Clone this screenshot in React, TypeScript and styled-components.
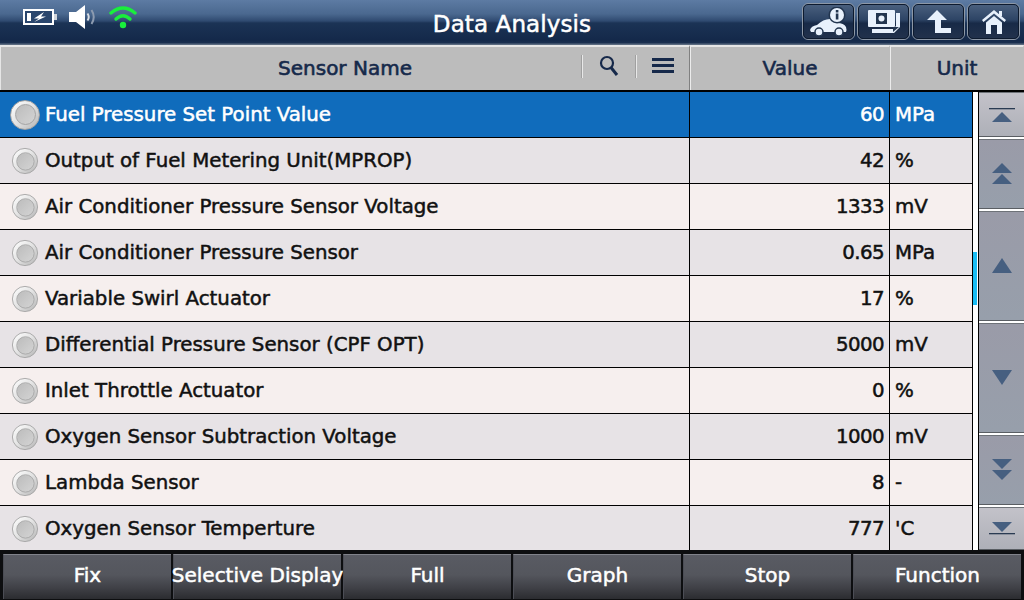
import React from "react";
import styled, { createGlobalStyle } from "styled-components";

const Global = createGlobalStyle`
  html, body { margin: 0; padding: 0; background: #000; }
  #root { width: 1024px; height: 600px; overflow: hidden; }
  * { box-sizing: border-box; }
`;

const font = `"DejaVu Sans", "Liberation Sans", sans-serif`;

const Screen = styled.div`
  width: 1024px;
  height: 600px;
  display: flex;
  flex-direction: column;
  overflow: hidden;
  font-family: ${font};
  background: #fff;
`;

const TitleBar = styled.header`
  position: relative;
  flex: 0 0 45px;
  height: 45px;
  display: flex;
  align-items: flex-start;
  justify-content: space-between;
  padding: 3px 4px 0 23px;
  background: linear-gradient(#5d7ba3 0, #4a688f 14px, #2f4a70 21px, #1b3355 23px, #14294a 40px, #1b3050 43px, #5b6b80 44px);
`;

const StatusIcons = styled.div`
  display: flex;
  align-items: center;
  gap: 11px;
  height: 32px;
  margin-top: -2px;
`;

const Title = styled.h1`
  position: absolute;
  left: 0;
  right: 0;
  top: 7px;
  margin: 0;
  text-align: center;
  color: #fff;
  font-size: 23px;
  line-height: 34px;
  font-weight: 400;
  letter-spacing: 0.1px;
  -webkit-text-stroke: 0.5px #fff;
`;

const NavButtons = styled.div`
  display: flex;
  gap: 2px;
`;

const NavButton = styled.button`
  width: 53px;
  height: 37px;
  padding: 0;
  display: flex;
  align-items: center;
  justify-content: center;
  border-radius: 6px;
  border: 1px solid #8c97a6;
  outline: 1px solid #0d1a2e;
  outline-offset: -2px;
  background: linear-gradient(#4b617f, #2d4465 45%, #182a47 55%, #22324c);
`;

const Main = styled.main`
  flex: 1;
  min-height: 0;
  display: flex;
  flex-direction: column;
`;

const Header = styled.div`
  flex: 0 0 47px;
  display: grid;
  grid-template-columns: 690px 200px 134px;
  border-bottom: 2px solid #000;
  background: #bcbcbc;
`;

const HeadCell = styled.div<{ $first?: boolean }>`
  display: flex;
  align-items: center;
  justify-content: center;
  position: relative;
  border-top: 2px solid #e6e6e6;
  border-left: 1px solid ${(p) => (p.$first ? "#e6e6e6" : "#ececec")};
  border-right: 1px solid ${(p) => (p.$first ? "#808080" : "transparent")};
  color: #16294a;
  font-size: 20px;
  font-weight: 400;
  -webkit-text-stroke: 0.6px #16294a;
  padding-bottom: 2px;
`;

const HeadTools = styled.div`
  position: absolute;
  right: 0;
  top: 7px;
  width: 107px;
  height: 24px;
  display: flex;
  align-items: center;
`;

const ToolDivider = styled.i`
  display: block;
  width: 1px;
  height: 23px;
  background: #e8e8e8;
  box-shadow: -1px 0 0 #a0a0a0;
`;

const ToolSlot = styled.div<{ $w: number }>`
  width: ${(p) => p.$w}px;
  display: flex;
  justify-content: center;
  align-items: center;
`;

const Body = styled.div`
  flex: 1;
  min-height: 0;
  display: grid;
  grid-template-columns: 973px 5px 46px;
  overflow: hidden;
`;

const Rows = styled.div`
  border-right: 1px solid #000;
  overflow: hidden;
`;

const Row = styled.div<{ $tone: "sel" | "a" | "b" }>`
  height: 46px;
  display: grid;
  grid-template-columns: 690px 200px 82px;
  border-bottom: 1px solid #000;
  color: ${(p) => (p.$tone === "sel" ? "#fff" : "#111")};
  background: ${(p) => (p.$tone === "sel" ? "#106cbc" : p.$tone === "a" ? "#e7e3e6" : "#f6efee")};
`;

const Cell = styled.div`
  display: flex;
  align-items: center;
  font-size: 19.8px;
  -webkit-text-stroke: 0.5px currentColor;
  white-space: nowrap;
`;

const NameCell = styled(Cell)`
  border-right: 1px solid #000;
  padding-left: 10px;
  gap: 5px;
`;

const ValueCell = styled(Cell)`
  justify-content: flex-end;
  border-right: 1px solid #000;
  padding-right: 5px;
  letter-spacing: -0.6px;
`;

const UnitCell = styled(Cell)`
  padding-left: 5px;
`;

const Radio = styled.span<{ $big?: boolean }>`
  flex: none;
  width: 30px;
  height: 30px;
  transform: scale(${(p) => (p.$big ? 1 : 0.87)});
  border-radius: 50%;
  border: 1px solid #a2a2a2;
  background: linear-gradient(135deg, #ffffff, #e2e2e2 50%, #b4b4b4);
  display: flex;
  align-items: center;
  justify-content: center;
  &::after {
    content: "";
    width: 19px;
    height: 19px;
    border-radius: 50%;
    border: 1px solid #a4a4a4;
    background: linear-gradient(135deg, #bcbcbc, #d4d4d4);
  }
`;

const Track = styled.div`
  position: relative;
  background: #fff;
`;

const Thumb = styled.div`
  position: absolute;
  left: 0;
  width: 4px;
  top: 160px;
  height: 53px;
  background: #18bdf5;
`;

const Side = styled.div`
  border-left: 1px solid #000;
  background: #fff;
  display: flex;
  flex-direction: column;
  gap: 2px;
  overflow: hidden;
`;

const SideButton = styled.button<{ $h: number; $end?: boolean }>`
  flex: 0 0 ${(p) => p.$h}px;
  height: ${(p) => p.$h}px;
  padding: 0;
  border: 0;
  border-top: 1px solid #6e7278;
  border-bottom: 1px solid #5a5e63;
  display: flex;
  align-items: center;
  justify-content: center;
  background: ${(p) =>
    p.$end
      ? "linear-gradient(#c3c2c9, #aeb0b8)"
      : "linear-gradient(#9a9ba8, #979fab)"};
`;

const Footer = styled.footer`
  flex: 0 0 50px;
  display: grid;
  grid-template-columns: repeat(6, 170px);
  padding: 4px 0 1px 3px;
  background: #0d0e10;
`;

const FootButton = styled.button`
  margin: 0 2px 0 0;
  padding: 0 0 5px;
  border: 0;
  border-top: 1px solid #80828a;
  border-left: 1px solid #4b4d55;
  color: #fff;
  font-family: ${font};
  font-size: 20px;
  -webkit-text-stroke: 0.5px #fff;
  white-space: nowrap;
  display: flex;
  align-items: center;
  justify-content: center;
  background: linear-gradient(#595b63, #54565d 45%, #3f4046 75%, #2b2c30);
`;

const Battery = () => (
  <svg width="34" height="20" viewBox="0 0 34 20">
    <rect x="0" y="2" width="31" height="16" fill="#fff" />
    <rect x="2" y="4" width="27" height="12" fill="#2a466d" />
    <rect x="4" y="6" width="4" height="8" fill="#fff" />
    <rect x="31" y="7" width="3" height="6" fill="#d0d4da" />
    <path d="M21 5 L11 11.5 H16 L11 15 L23 9.5 H18Z" fill="#fff" />
  </svg>
);

const Speaker = () => (
  <svg width="30" height="26" viewBox="0 0 30 26">
    <path d="M1 8H8L17 1V25L8 18H1Z" fill="#fff" />
    <path d="M19.5 9.5Q22 13 19.5 16.5" fill="none" stroke="#d8dde4" strokeWidth="2" />
    <path d="M23.5 6Q28 13 23.5 20" fill="none" stroke="#8d9bb0" strokeWidth="2" />
  </svg>
);

const Wifi = () => (
  <svg width="28" height="24" viewBox="0 0 28 24">
    <g fill="none" stroke="#19ee3c" strokeWidth="3.4" strokeLinecap="round">
      <path d="M2 8Q14 -2 26 8" />
      <path d="M7 14Q14 7.5 21 14" />
    </g>
    <circle cx="14" cy="20" r="3.2" fill="#19ee3c" />
  </svg>
);

const ink = "#e8f1fc";
const dark = "#22354f";

const CarInfo = () => (
  <svg width="38" height="30" viewBox="0 0 38 30">
    <path d="M0 23 Q1 19 7 18 Q14 11 22 12 L27 16 Q34 16 36 20 Q37 23 36 25 H1Z" fill={ink} />
    <circle cx="9" cy="25" r="4" fill={ink} stroke={dark} strokeWidth="1.5" />
    <circle cx="29" cy="25" r="4" fill={ink} stroke={dark} strokeWidth="1.5" />
    <circle cx="27" cy="8" r="8.5" fill={dark} />
    <circle cx="27" cy="8" r="7" fill={ink} />
    <rect x="25.8" y="6.5" width="2.6" height="6" fill={dark} />
    <rect x="25.8" y="3" width="2.6" height="2.5" fill={dark} />
  </svg>
);

const Snapshot = () => (
  <svg width="32" height="24" viewBox="0 0 32 24">
    <path d="M28 3H32V17L26 23H4V19H25L28 16Z" fill={ink} />
    <path d="M25 22V17H31Z" fill={dark} />
    <rect x="0" y="0" width="27" height="17" rx="1" fill={ink} />
    <rect x="3" y="3" width="21" height="11" fill={dark} />
    <rect x="3" y="3" width="5" height="11" fill={ink} />
    <rect x="19" y="3" width="5" height="11" fill={ink} />
    <circle cx="13.5" cy="8.5" r="3" fill={ink} />
  </svg>
);

const BackArrow = () => (
  <svg width="24" height="23" viewBox="0 0 24 23">
    <path d="M0 10L10 0L20 10H14V18H24V23H8V10Z" fill={ink} />
  </svg>
);

const HomeIcon = () => (
  <svg width="24" height="24" viewBox="0 0 24 24">
    <path d="M12 0L24 10L22.5 12L12 3.5L1.5 12L0 10Z" fill={ink} />
    <path d="M12 6L20 12.5V24H15V15H9V24H4V12.5Z" fill={ink} />
    <rect x="17" y="1" width="3" height="5" fill={ink} />
  </svg>
);

const SearchIcon = () => (
  <svg width="20" height="22" viewBox="0 0 20 22">
    <circle cx="8" cy="8" r="6" fill="none" stroke="#16294a" strokeWidth="2.2" />
    <path d="M12 12.5L18 20" stroke="#16294a" strokeWidth="3" />
  </svg>
);

const MenuIcon = () => (
  <svg width="22" height="16" viewBox="0 0 22 16">
    <rect y="0" width="22" height="3" fill="#16294a" />
    <rect y="6" width="22" height="3" fill="#16294a" />
    <rect y="12" width="22" height="3" fill="#16294a" />
  </svg>
);

const arrowFill = "#465f80";

const ArrowEnd = ({ down }: { down?: boolean }) => (
  <svg width="28" height="18" viewBox="0 0 28 18">
    {down ? (
      <>
        <path d="M4 2H24L14 12Z" fill={arrowFill} />
        <rect x="1" y="13" width="26" height="1.3" fill="#2a3b52" />
      </>
    ) : (
      <>
        <rect x="1" y="2" width="26" height="1.3" fill="#2a3b52" />
        <path d="M4 16H24L14 6Z" fill={arrowFill} />
      </>
    )}
  </svg>
);

const ArrowDouble = ({ down }: { down?: boolean }) => (
  <svg width="22" height="22" viewBox="0 0 22 22">
    {down ? (
      <>
        <path d="M1 0H21L11 10Z" fill={arrowFill} />
        <path d="M1 11H21L11 21Z" fill={arrowFill} />
      </>
    ) : (
      <>
        <path d="M1 10H21L11 0Z" fill={arrowFill} />
        <path d="M1 21H21L11 11Z" fill={arrowFill} />
      </>
    )}
  </svg>
);

const ArrowSingle = ({ down }: { down?: boolean }) => (
  <svg width="20" height="16" viewBox="0 0 20 16">
    <path d={down ? "M0 0H20L10 15Z" : "M0 15H20L10 0Z"} fill={arrowFill} />
  </svg>
);

const rows: [string, string, string][] = [
  ["Fuel Pressure Set Point Value", "60", "MPa"],
  ["Output of Fuel Metering Unit(MPROP)", "42", "%"],
  ["Air Conditioner Pressure Sensor Voltage", "1333", "mV"],
  ["Air Conditioner Pressure Sensor", "0.65", "MPa"],
  ["Variable Swirl Actuator", "17", "%"],
  ["Differential Pressure Sensor (CPF OPT)", "5000", "mV"],
  ["Inlet Throttle Actuator", "0", "%"],
  ["Oxygen Sensor Subtraction Voltage", "1000", "mV"],
  ["Lambda Sensor", "8", "-"],
  ["Oxygen Sensor Temperture", "777", "'C"],
];

const actions = ["Fix", "Selective Display", "Full", "Graph", "Stop", "Function"];

export default function App() {
  return (
    <Screen>
      <Global />
      <TitleBar>
        <StatusIcons>
          <Battery />
          <Speaker />
          <Wifi />
        </StatusIcons>
        <Title>Data Analysis</Title>
        <NavButtons>
          <NavButton><CarInfo /></NavButton>
          <NavButton><Snapshot /></NavButton>
          <NavButton><BackArrow /></NavButton>
          <NavButton><HomeIcon /></NavButton>
        </NavButtons>
      </TitleBar>
      <Main>
        <Header>
          <HeadCell $first>
            <span>Sensor Name</span>
            <HeadTools>
              <ToolDivider />
              <ToolSlot $w={53}><SearchIcon /></ToolSlot>
              <ToolDivider />
              <ToolSlot $w={53}><MenuIcon /></ToolSlot>
            </HeadTools>
          </HeadCell>
          <HeadCell>Value</HeadCell>
          <HeadCell>Unit</HeadCell>
        </Header>
        <Body>
          <Rows>
            {rows.map(([name, value, unit], i) => (
              <Row key={name} $tone={i === 0 ? "sel" : i % 2 ? "a" : "b"}>
                <NameCell>
                  <Radio $big={i === 0} />
                  {name}
                </NameCell>
                <ValueCell>{value}</ValueCell>
                <UnitCell>{unit}</UnitCell>
              </Row>
            ))}
          </Rows>
          <Track><Thumb /></Track>
          <Side>
            <SideButton $h={45} $end><ArrowEnd /></SideButton>
            <SideButton $h={70}><ArrowDouble /></SideButton>
            <SideButton $h={110}><ArrowSingle /></SideButton>
            <SideButton $h={110}><ArrowSingle down /></SideButton>
            <SideButton $h={70}><ArrowDouble down /></SideButton>
            <SideButton $h={43} $end><ArrowEnd down /></SideButton>
          </Side>
        </Body>
      </Main>
      <Footer>
        {actions.map((a) => (
          <FootButton key={a}>{a}</FootButton>
        ))}
      </Footer>
    </Screen>
  );
}
